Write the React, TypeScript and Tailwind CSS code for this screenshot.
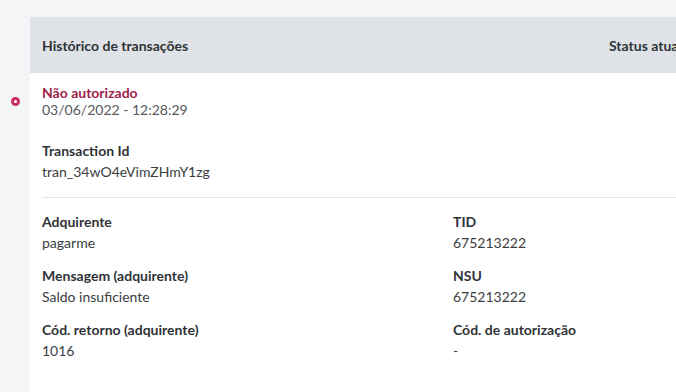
const fields = [
  { left: { label: 'Adquirente', value: 'pagarme' }, right: { label: 'TID', value: '675213222' } },
  { left: { label: 'Mensagem (adquirente)', value: 'Saldo insuficiente' }, right: { label: 'NSU', value: '675213222' } },
  { left: { label: 'Cód. retorno (adquirente)', value: '1016' }, right: { label: 'Cód. de autorização', value: '-' } },
];

function Field({ label, value }: { label: string; value: string }) {
  return (
    <div>
      <div className="text-[14px] leading-[20px] font-bold text-[#2f3338]">{label}</div>
      <div className="text-[14px] leading-[20px] text-[#3a3e42] mt-[1px]">{value}</div>
    </div>
  );
}

export default function App() {
  return (
    <div
      className="w-[676px] h-[392px] overflow-hidden bg-[#f4f5f7] pt-[17px]"
      style={{ fontFamily: 'Lato, "Open Sans", sans-serif' }}
    >
      <div className="flex">
        {/* Timeline dot */}
        <div className="w-[30px] shrink-0 pt-[80px] flex justify-center">
          <span className="w-[9px] h-[9px] rounded-full bg-[#c8315d] flex items-center justify-center">
            <span className="w-[3px] h-[3px] rounded-full bg-white" />
          </span>
        </div>

        {/* Card */}
        <div className="w-[760px] shrink-0 bg-white h-[400px]">
          <div className="h-[56px] bg-[#dfe3e7] flex items-center px-3 text-[14px] font-bold text-[#2f3338]">
            <div className="w-[567px] shrink-0">Histórico de transações</div>
            <div>Status atual</div>
          </div>

          <div className="px-3 pt-[11px]">
            <div className="text-[14px] leading-[17px] font-bold text-[#9e2449]">Não autorizado</div>
            <div className="text-[14px] leading-[17px] text-[#55595d]">03/06/2022 - 12:28:29</div>

            <div className="mt-[23px]">
              <Field label="Transaction Id" value="tran_34wO4eVimZHmY1zg" />
            </div>

            <div className="mt-[15px] border-t border-[#e3e5e8]" />

            <div className="pt-[14px] flex flex-col gap-[13px]">
              {fields.map((row) => (
                <div key={row.left.label} className="grid grid-cols-[411px_1fr]">
                  <Field label={row.left.label} value={row.left.value} />
                  <Field label={row.right.label} value={row.right.value} />
                </div>
              ))}
            </div>
          </div>
        </div>
      </div>
    </div>
  );
}
